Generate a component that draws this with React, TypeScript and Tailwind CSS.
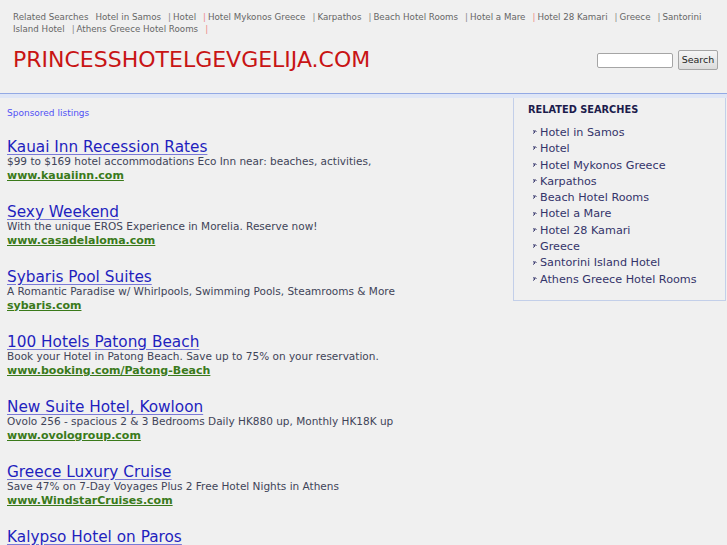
const topLinks = [
  { t: "Hotel in Samos", red: false },
  { t: "Hotel", red: false },
  { t: "Hotel Mykonos Greece", red: true },
  { t: "Karpathos", red: false },
  { t: "Beach Hotel Rooms", red: false },
  { t: "Hotel a Mare", red: false },
  { t: "Hotel 28 Kamari", red: true },
  { t: "Greece", red: false },
  { t: "Santorini Island Hotel", red: false },
  { t: "Athens Greece Hotel Rooms", red: false },
];

const ads = [
  { title: "Kauai Inn Recession Rates", desc: "$99 to $169 hotel accommodations Eco Inn near: beaches, activities,", url: "www.kauaiinn.com" },
  { title: "Sexy Weekend", desc: "With the unique EROS Experience in Morelia. Reserve now!", url: "www.casadelaloma.com" },
  { title: "Sybaris Pool Suites", desc: "A Romantic Paradise w/ Whirlpools, Swimming Pools, Steamrooms & More", url: "sybaris.com" },
  { title: "100 Hotels Patong Beach", desc: "Book your Hotel in Patong Beach. Save up to 75% on your reservation.", url: "www.booking.com/Patong-Beach" },
  { title: "New Suite Hotel, Kowloon", desc: "Ovolo 256 - spacious 2 & 3 Bedrooms Daily HK880 up, Monthly HK18K up", url: "www.ovologroup.com" },
  { title: "Greece Luxury Cruise", desc: "Save 47% on 7-Day Voyages Plus 2 Free Hotel Nights in Athens", url: "www.WindstarCruises.com" },
  { title: "Kalypso Hotel on Paros", desc: "Paros Island Greece - Great rooms, great view, great price!", url: "www.kalypso.gr" },
];

const related = topLinks.map((l) => l.t);

export default function App() {
  return (
    <div className="w-[727px] h-[545px] overflow-hidden bg-[#f0f0f0] font-['DejaVu_Sans',sans-serif]">
      {/* header */}
      <header className="border-b border-[#93a9e4]">
        <div className="pl-[13px] pr-[8px] pt-[11px] text-[8.7px] leading-[12px] text-[#666]">
          <span className="mr-[5px]">Related Searches</span>
          {topLinks.map((l, i) => (
            <span key={i}>
              {i > 0 && <span className={l.red ? "text-[#e88]" : "text-[#888]"}>|</span>}
              <span className="ml-[2px] mr-[7px]">{l.t}</span>
            </span>
          ))}
          <span className="text-[#e88]">|</span>
        </div>
        <div className="flex items-center justify-between pl-[13px] pr-[9px] pt-[11px] pb-[19px]">
          <h1 className="text-[22px] leading-[28px] text-[#c81414]">PRINCESSHOTELGEVGELIJA.COM</h1>
          <div className="flex items-center gap-[5px]">
            <input className="w-[76px] h-[15px] bg-white border border-[#a5a5a5] rounded-[2px]" />
            <button className="w-[40px] h-[20px] text-[9.5px] text-[#222] bg-gradient-to-b from-[#f6f6f6] to-[#dcdcdc] border border-[#a5a5a5] rounded-[2px]">
              Search
            </button>
          </div>
        </div>
      </header>
      <div className="h-[4px] bg-[#dfe6f6]" />

      <div className="flex">
        {/* main */}
        <main className="flex-1 pl-[7px] pt-[9px]">
          <div className="text-[9px] leading-[12px] text-[#5050f5]">Sponsored listings</div>
          <div className="pt-[21px]">
            {ads.map((a, i) => (
              <div key={i} className="mb-[22px]">
                <div className="text-[15.3px] leading-[15px] text-[#1f1fbe] underline decoration-[#7a7ad8] underline-offset-[2px]">{a.title}</div>
                <div className="text-[10.5px] leading-[13px] text-[#404458]">{a.desc}</div>
                <div className="text-[11px] leading-[15px] font-bold text-[#3a7a1a] underline">{a.url}</div>
              </div>
            ))}
          </div>
        </main>

        {/* sidebar */}
        <aside className="w-[213px] mr-[1px] h-[203px] border border-t-0 border-[#c3cfe9] pl-[14px] pt-[5px]">
          <div className="text-[9.8px] leading-[14px] font-bold text-[#1c1c4c]">RELATED SEARCHES</div>
          <ul className="pt-[8px] pl-[4px]">
            {related.map((r, i) => (
              <li key={i} className="flex items-center text-[11.2px] leading-[16.3px] text-[#34346a]">
                <svg width="6" height="6" viewBox="0 0 6 6" className="mr-[2px] mt-[-2px]">
                  <path d="M1 1.5 L3 3 L1 4.5 M2.5 1 L4.5 3" stroke="#34346a" strokeWidth="1" fill="none" />
                </svg>
                {r}
              </li>
            ))}
          </ul>
        </aside>
      </div>
    </div>
  );
}
